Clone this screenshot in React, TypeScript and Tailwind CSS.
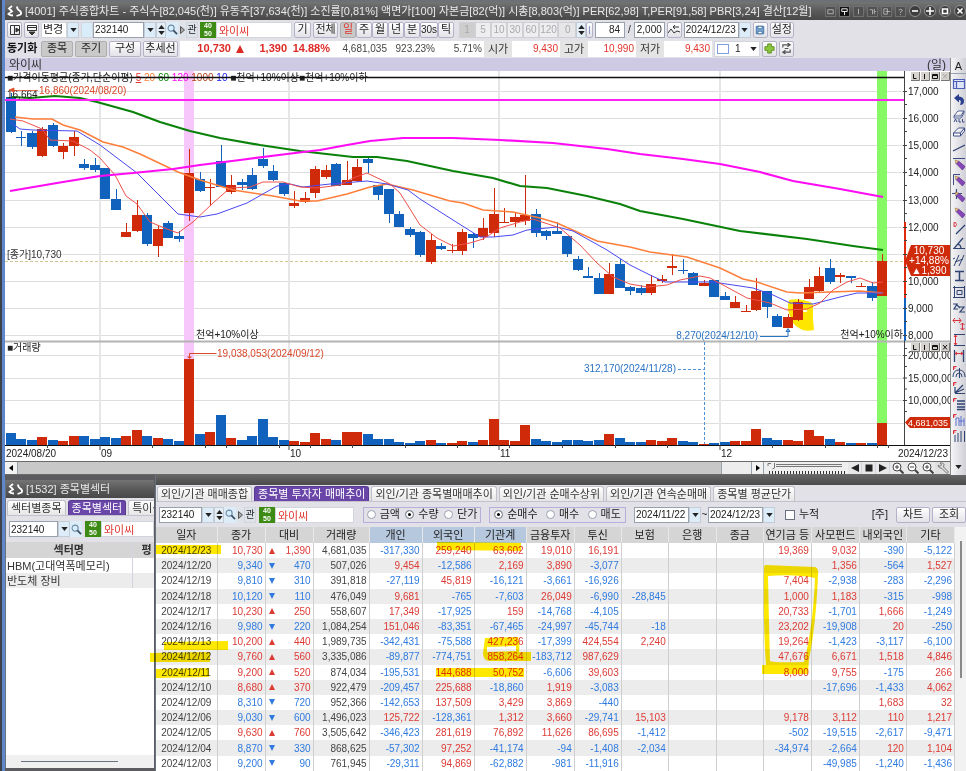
import { ReactNode } from 'react';
import clsx from 'clsx';

const FONT = "font-['Liberation_Sans','Noto_Sans_CJK_KR',sans-serif]";

const RED = '#cf2a0a';
const BLUE = '#1062bd';

// [up, high, body top, body bottom, low, volume height]
const candles: [number, number, number, number, number, number][] = [
  [0, 93, 97, 132, 133, 12], [0, 131, 137, 138, 146, 6], [0, 131, 133, 147, 149, 5], [1, 127, 129, 156, 157, 8],
  [0, 123, 125, 146, 147, 5], [1, 143, 146, 152, 159, 4], [1, 131, 137, 146, 156, 9], [0, 159, 164, 168, 170, 9],
  [0, 158, 165, 170, 172, 6], [0, 168, 168, 199, 199, 8], [0, 189, 199, 210, 210, 7], [1, 223, 232, 237, 237, 9],
  [1, 200, 215, 231, 232, 15], [0, 213, 215, 244, 246, 9], [1, 225, 229, 246, 257, 7], [0, 221, 223, 238, 238, 6],
  [0, 231, 236, 239, 242, 4], [1, 149, 173, 213, 221, 86], [0, 172, 179, 191, 192, 11], [1, 179, 187, 188, 206, 13],
  [0, 145, 161, 187, 187, 30], [1, 175, 185, 192, 194, 7], [0, 179, 182, 185, 190, 5], [0, 168, 175, 189, 190, 9],
  [0, 148, 159, 166, 168, 26], [0, 165, 171, 180, 181, 8], [0, 182, 183, 194, 196, 5], [1, 191, 203, 206, 208, 4],
  [1, 192, 198, 202, 203, 3], [1, 166, 169, 193, 198, 12], [1, 165, 170, 177, 179, 6], [0, 163, 164, 186, 186, 5],
  [1, 161, 180, 185, 185, 13], [1, 159, 167, 181, 182, 13], [0, 157, 159, 163, 173, 11], [0, 185, 185, 195, 200, 6],
  [0, 189, 189, 214, 223, 6], [0, 211, 214, 227, 227, 3], [0, 227, 229, 235, 237, 2], [0, 231, 232, 255, 257, 4],
  [1, 234, 240, 262, 264, 5], [0, 243, 246, 249, 250, 2], [1, 244, 250, 251, 253, 2], [1, 229, 232, 251, 255, 4],
  [0, 233, 234, 238, 248, 3], [1, 218, 228, 237, 240, 5], [1, 188, 214, 233, 237, 26], [1, 208, 222, 223, 223, 5],
  [1, 212, 217, 222, 227, 4], [1, 175, 215, 221, 225, 20], [0, 209, 214, 233, 237, 6], [0, 230, 231, 236, 240, 4],
  [0, 222, 231, 234, 234, 3], [0, 236, 236, 254, 257, 5], [0, 256, 259, 270, 271, 5], [0, 267, 276, 278, 278, 4],
  [0, 273, 278, 294, 294, 5], [1, 263, 274, 294, 294, 11], [0, 259, 264, 288, 288, 7], [0, 286, 287, 291, 295, 3],
  [0, 285, 288, 293, 295, 3], [1, 275, 284, 293, 295, 5], [1, 275, 279, 281, 283, 4], [1, 254, 266, 268, 275, 7],
  [0, 259, 270, 271, 274, 4], [0, 272, 273, 285, 285, 3], [1, 280, 283, 286, 286, 1], [0, 280, 280, 297, 297, 2],
  [0, 292, 296, 300, 300, 3], [1, 296, 302, 308, 308, 4], [1, 305, 311, 312, 312, 4], [1, 278, 291, 310, 311, 16],
  [0, 291, 291, 307, 318, 7], [0, 314, 316, 327, 327, 5], [1, 314, 317, 328, 328, 5], [1, 299, 302, 320, 321, 4],
  [1, 279, 287, 299, 299, 15], [1, 267, 276, 291, 293, 9], [0, 259, 268, 282, 284, 6], [1, 273, 275, 277, 283, 3],
  [0, 276, 276, 278, 283, 2], [1, 283, 286, 287, 287, 2], [0, 282, 286, 298, 301, 2], [1, 254, 261, 296, 296, 22],
];

const ma120 =
  '10,191 63,182 100,176 133,173 173,169 200,165 240,160 287,154 320,150 347,145 370,141 403,138 453,138 500,140 553,143 607,149 640,154 683,159 720,164 760,172 793,181 840,189 883,197';
const ma60 =
  '12,97 30,98 55,96 80,98 97,102 133,112 160,122 190,131 220,138 260,145 300,151 353,157 377,157 407,161 453,171 493,178 520,186 547,188 587,196 620,204 640,211 683,219 740,231 807,239 853,246 883,250';
const ma20 =
  '15,117 33,119 52,119 63,125 80,130 103,142 123,147 140,154 178,172 200,180 233,190 273,196 300,201 317,201 330,198 347,194 370,187 387,184 413,190 450,201 463,203 483,210 513,212 540,218 557,223 597,241 630,247 650,252 687,257 720,268 743,279 757,282 787,292 800,293 860,291 883,293';
const ma10 =
  '10,122 20,129 33,130 77,131 100,145 137,173 167,203 178,214 200,217 217,214 247,203 277,186 290,184 303,187 330,184 367,181 387,184 408,190 420,199 453,220 480,237 493,237 513,235 527,230 557,227 573,231 607,250 630,265 650,275 665,282 713,282 753,288 773,295 790,303 813,304 840,297 857,293 883,293';
const ma5 =
  '10,119 23,121 42,129 50,140 73,141 90,150 100,158 115,175 126,196 137,204 150,222 167,229 178,233 193,222 213,203 230,188 250,187 263,182 283,182 300,187 317,188 340,185 353,178 367,173 390,184 400,193 420,225 437,238 453,246 470,243 483,239 500,228 520,222 533,219 560,228 580,245 597,263 613,277 630,284 647,287 667,285 680,280 700,276 710,278 723,285 747,298 770,303 787,310 807,309 820,303 833,290 847,282 860,278 873,283 883,282';

const priceLevels = [17000, 16000, 15000, 14000, 13000, 12000, 11000, 10000, 9000, 8000];
const dateTicks = [47, 152, 205, 226, 279, 310, 352, 405, 457, 509, 562, 615, 667, 772, 825, 877, 888];
const months: [number, string][] = [[100, '09'], [289, '10'], [499, '11'], [720, '12']];

function priceY(price: number) {
  return Math.round(335 - (price - 8000) * 0.0271) + 0.5;
}

function PaneButtons({ y, faded }: { y: number; faded?: boolean }) {
  return (
    <g>
      {[911, 921, 931, 941].map((x) => (
        <g key={x}>
          <rect x={x} y={y} width="9" height="9" fill="#d6d3ce" />
          <path d={`M${x} ${y + 8.5}h8.5v-8.5`} stroke="#777" fill="none" />
        </g>
      ))}
      <path d={`M913.5 ${y + 2}v4.5h3M924.5 ${y + 2}v5`} stroke="#111" fill="none" />
      <path d={`M932.5 ${y + 2.5}h5v4h-5zM932.5 ${y + 3.5}h5`} stroke="#111" fill="none" />
      <path d={`M943 ${y + 2}l4 4.5m0-4.5l-4 4.5`} stroke={faded ? '#aaa' : '#111'} fill="none" />
    </g>
  );
}

function StockChart() {
  return (
    <svg viewBox="5 71 945 390" className="block w-full h-auto bg-white" fontSize="10" role="img" aria-label="와이씨 일봉 차트">
      <g stroke="#dedede">
        {priceLevels.map((p) => (
          <line key={p} x1="5" x2="904" y1={priceY(p)} y2={priceY(p)} />
        ))}
        {[355.5, 378.5, 400.5, 423.5].map((y) => (
          <line key={y} x1="5" x2="904" y1={y} y2={y} />
        ))}
      </g>
      {months.map(([x]) => (
        <line key={x} x1={x} x2={x} y1="71" y2="445" stroke="#e6e6e6" strokeWidth="2" />
      ))}
      <rect x="184" y="71" width="10" height="288" fill="#f7c6fb" />
      <rect x="877" y="71" width="10" height="352" fill="#86f964" />
      <line x1="5" x2="904" y1="261.5" y2="261.5" stroke="#cfc78f" strokeDasharray="3 2" />

      {/* marker stroke around the 12/11 candle */}
      <path d="M789 300q8 -2 18 1q6 1 6 5v13l1 11q-10 2 -15 -2q-7 -4 -8 -10q-5 -9 -2 -18z" fill="#ffe600" />
      <ellipse cx="805" cy="311" rx="2.5" ry="1" fill="#fff" />

      {candles.map(([up, high, top, bottom, low, vol], i) => {
        const x = Math.round(10.6 + 10.5 * i);
        const color = up ? RED : BLUE;
        return (
          <g key={i} fill={color}>
            <line x1={x + 0.5} x2={x + 0.5} y1={high} y2={low} stroke={color} />
            <rect x={x - 5} y={top} width="10" height={bottom - top} />
            <rect x={x - 5} y={445 - vol} width="10" height={vol} />
          </g>
        );
      })}

      <g fill="none">
        <polyline points={ma20} stroke="#ff7f3a" strokeWidth="1.5" />
        <polyline points={ma10} stroke="#4a48f0" strokeWidth="1" />
        <polyline points={ma5} stroke="#f0504a" strokeWidth="1" />
        <polyline points={ma60} stroke="#0a820a" strokeWidth="2.2" />
        <polyline points={ma120} stroke="#ff0cf4" strokeWidth="2.2" />
      </g>

      <line x1="5" x2="904" y1="100" y2="100" stroke="#ff22f4" strokeWidth="2" />
      <text x="7" y="81" fill="#222">
        ■가격이동평균(종가,단순이평) <tspan fill="#e8332c" textDecoration="underline">5</tspan>{' '}
        <tspan fill="#ff7f3a">20</tspan> <tspan fill="#0a820a">60</tspan> <tspan fill="#ff0cf4">120</tspan>{' '}
        <tspan fill="#b5431f">1000</tspan> <tspan fill="#2222ee">10</tspan> ■천억+10%이상■천억+10%이하
      </text>
      <line x1="5" x2="904" y1="77.5" y2="77.5" stroke="#111" strokeWidth="1.5" />
      <text x="7" y="98" fill="#222">16,664</text>
      <path d="M12 90.5h26M9 90l5-2v4z" stroke="#e0502f" fill="#e0502f" strokeWidth="0.8" />
      <text x="39" y="94" fill="#d9482b">16,860(2024/08/20)</text>
      <text x="7" y="258" fill="#333">[종가]10,730</text>
      <text x="196" y="338" fill="#222">천억+10%이상</text>
      <text x="903" y="338" fill="#222" textAnchor="end">천억+10%이하</text>
      <text x="758" y="339" fill="#2b74c4" textAnchor="end">8,270(2024/12/10)</text>
      <path d="M760 336.5h28v-7m-2 2l2-3l2 3z" stroke="#2b74c4" fill="none" />

      <line x1="5" x2="950" y1="341.5" y2="341.5" stroke="#b4b4b4" strokeWidth="2" />
      <text x="7" y="351" fill="#222">■거래량</text>
      <path d="M189.5 357v-3.500h27" stroke="#d9482b" fill="none" />
      <path d="M187 356.500h5l-2.500 2.500z" fill="#d9482b" />
      <text x="217" y="357" fill="#d9482b">19,038,053(2024/09/12)</text>
      <text x="676" y="372" fill="#2b74c4" textAnchor="end">312,170(2024/11/28)</text>
      <path d="M678 369.500h26M704.500 342v102" stroke="#4f93d8" strokeDasharray="3 2" fill="none" />

      {/* axes */}
      <rect x="905" y="71" width="45" height="390" fill="#fff" />
      <rect x="5" y="446" width="945" height="15" fill="#fff" />
      <line x1="904.5" x2="904.5" y1="71" y2="445" stroke="#444" />
      <line x1="5" x2="950" y1="445.5" y2="445.5" stroke="#111" />
      <line x1="905" x2="905" y1="222" y2="298" stroke="#e02a10" strokeWidth="2" />
      <line x1="905" x2="905" y1="298" y2="341" stroke="#1062bd" strokeWidth="2" />
      <line x1="905" x2="950" y1="341.5" y2="341.5" stroke="#b4b4b4" strokeWidth="2" />
      {priceLevels.map((p) => (
        <g key={p} fill="#222">
          <path d={`M903 ${priceY(p)}h4M904 ${priceY(p) + 13}h3`} stroke="#444" />
          {p !== 11000 && <text x="908" y={priceY(p) + 3.5}>{p.toLocaleString('en-US')}</text>}
        </g>
      ))}
      {['20,000,000', '15,000,000', '10,000,000'].map((label, i) => (
        <g key={label} fill="#222">
          <path d={`M903 ${355.5 + i * 22.5}h4M904 ${366.5 + i * 22.5}h3`} stroke="#444" />
          <text x="908" y={359 + i * 22.5}>{label}</text>
        </g>
      ))}
      <PaneButtons y={72} faded />
      <PaneButtons y={343} />
      <path d="M905 261l6-16h39v31h-39z" fill={RED} />
      <g fill="#fff" textAnchor="middle">
        <text x="929" y="254">10,730</text>
        <text x="929" y="264">+14,88%</text>
        <text x="929" y="274">▲1,390</text>
      </g>
      <path d="M905 422.500l5-5.500h40v11h-40z" fill={RED} />
      <text x="908" y="426" fontSize="9" fill="#fff">4,681,035</text>
      {dateTicks.map((x) => (
        <line key={x} x1={x + 0.5} x2={x + 0.5} y1="445" y2="448" stroke="#444" />
      ))}
      {months.map(([x, label]) => (
        <g key={x} fill="#222">
          <line x1={x} x2={x} y1="445" y2="450" stroke="#444" />
          <text x={x + 1} y="457">{label}</text>
        </g>
      ))}
      <text x="6" y="457" fill="#222">2024/08/20</text>
      <text x="948" y="457" fill="#222" textAnchor="end">2024/12/23</text>
    </svg>
  );
}

function Caret({ up }: { up?: boolean }) {
  return (
    <svg viewBox="0 0 8 5" className="w-[7px] h-[4px] shrink-0">
      <path d={up ? 'M0 5L4 0l4 5z' : 'M0 0h8L4 5z'} fill="#222" />
    </svg>
  );
}

function ArrowButton({ label }: { label: string }) {
  return (
    <button aria-label={label} className="w-[12px] h-4 flex items-center justify-center bg-[#dcecf8] border border-[#c4ccd6] shrink-0">
      <Caret />
    </button>
  );
}

function Spinner() {
  return (
    <span className="flex flex-col justify-between w-[10px] h-4 py-[2px] items-center bg-[#e4eef6] border border-[#c4ccd6] shrink-0">
      <Caret up />
      <Caret />
    </span>
  );
}

function SearchButton() {
  return (
    <button aria-label="검색" className="w-[12px] h-4 flex items-center justify-center bg-[#dcecf8] shrink-0">
      <svg viewBox="0 0 12 12" className="w-[11px] h-[11px]" fill="none">
        <circle cx="4.500" cy="4.500" r="3.300" fill="#d5efff" stroke="#6d8ba3" strokeWidth="1.200" />
        <path d="M7 7l4 4" stroke="#3c5266" strokeWidth="2" />
      </svg>
    </button>
  );
}

function MarginBadge() {
  return (
    <span className="w-4 h-4 flex flex-col bg-[#3d8a14] text-white text-[7px] leading-[8px] text-center font-bold shrink-0">
      <span>40</span>
      <span>50</span>
    </span>
  );
}

function CodeSearch({ id, full, width }: { id: string; full?: boolean; width: string }) {
  return (
    <div className="flex items-center shrink-0">
      <label htmlFor={id} className="sr-only">종목코드</label>
      <input id={id} defaultValue="232140" className={clsx('h-4 pl-px bg-white border border-gray-400 text-[10px] leading-none text-[#222]', width)} />
      <ArrowButton label="최근 종목" />
      {full && <Spinner />}
      <SearchButton />
      {full && (
        <>
          <button aria-label="다음 종목" className="w-[8px] h-4 flex items-center justify-center bg-[#dfe3ea] shrink-0">
            <svg viewBox="0 0 5 8" className="w-[5px] h-[8px]">
              <path d="M.5.500L4.500 4L.5 7.500z" fill="#aaa" stroke="#555" />
            </svg>
          </button>
          <button className="w-[12px] h-4 flex items-center justify-center bg-[#dfe3ea] border border-gray-300 text-[10px] leading-none text-[#222] shrink-0">관</button>
        </>
      )}
    </div>
  );
}

function ToolButton({ children, className, pressed }: { children: ReactNode; className?: string; pressed?: boolean }) {
  return (
    <button
      className={clsx(
        'h-4 flex items-center justify-center border rounded-[2px] leading-none shrink-0',
        pressed ? 'bg-[#c9c9c9] border-[#aeaeae]' : 'bg-linear-to-b from-white to-[#e2e2e8] border-[#b4b2c8]',
        className,
      )}
    >
      {children}
    </button>
  );
}

function Logo() {
  return (
    <svg viewBox="0 0 16 12" className="w-4 h-3 shrink-0" fill="none" stroke="#fff" strokeWidth="1.800">
      <path d="M5 1L2 3.500Q4 5 5 6.500Q3 7.500 1.500 9Q3 10.500 6 10.500" />
      <path d="M10 1.500Q10 4.500 13 6Q15 8 13.500 9.500L9.500 11" />
    </svg>
  );
}

function TitleBar({ title, children }: { title: string; children?: ReactNode }) {
  return (
    <div className="h-[18px] flex items-center gap-[2px] pl-[2px] bg-linear-to-b from-[#747474] via-[#5a5a5a] to-[#484848] text-[#e8e8e8] overflow-hidden">
      <Logo />
      <h2 className="text-[11px] leading-none whitespace-nowrap flex-1">{title}</h2>
      {children}
    </div>
  );
}

const frameIcons = ['M2 3h6v4.500H2z', 'M2 2h6v3H2zM5 5v4', 'M5 2v6', 'M2 3h3v5M7 2v6M7 5h2', 'M2 2h4v6H2zM4 5h5', 'M3 3.500q2-2 4 0q0 1-2 2v1M5 8v1'];
const windowIcons = ['M3 6h6', 'M6 2v8M2 6h8', 'M3.500 4h5v4.500h-5z', 'M3.500 3.500l5 5m0-5l-5 5'];

function WindowControls() {
  return (
    <div className="flex items-center gap-[3px]">
      {frameIcons.map((d, i) => (
        <button key={d} aria-label={`창 설정 ${i + 1}`} className={clsx('w-[11px] h-[11px] border border-[#707070]', i === 1 ? 'bg-[#111]' : 'bg-[#505050]')}>
          <svg viewBox="0 0 10 10" className="w-[9px] h-[9px]" fill="none" stroke={i === 1 ? '#fff' : '#b8b8b8'}>
            <path d={d} />
          </svg>
        </button>
      ))}
      {windowIcons.map((d, i) => (
        <button key={d} aria-label={`창 제어 ${i + 1}`}>
          <svg viewBox="0 0 12 12" className="w-3 h-3" fill="none">
            <circle cx="6" cy="6" r="5.500" fill="#3d3d3d" stroke="#929292" />
            <path d={d} stroke="#fff" strokeWidth="1.600" />
          </svg>
        </button>
      ))}
    </div>
  );
}

const periods = ['일', '주', '월', '년', '분', '30s', '틱'];
const minutes = ['1', '5', '10', '30', '60', '120'];

function ChartToolbar() {
  return (
    <div className="h-[19px] flex items-center gap-[2px] pl-[2px] pr-2 bg-[#e3e1e8] text-[11px] leading-none text-[#222] overflow-hidden">
      <ToolButton className="w-[15px]">
        <svg viewBox="0 0 12 12" className="w-3 h-3" fill="none" stroke="#333">
          <path d="M1.500 1.500h9v9h-9zM5.500 1.500v9" />
          <path d="M7 4l3 2l-3 2z" fill="#333" />
        </svg>
      </ToolButton>
      <ToolButton className="w-[15px]">
        <svg viewBox="0 0 12 12" className="w-3 h-3" fill="none" stroke="#333">
          <path d="M1.500 1.500h9v5h-9zM1 3.500h10" />
          <path d="M3 8h6l-3 3z" fill="#333" />
        </svg>
      </ToolButton>
      <div className="flex shrink-0">
        <label htmlFor="change" className="sr-only">변경</label>
        <select id="change" className="appearance-none w-[26px] h-4 px-px bg-white border border-gray-300 leading-none">
          <option>변경</option>
        </select>
        <ArrowButton label="변경 목록" />
      </div>
      <div className="flex items-center shrink-0">
        <span className="w-[12px] h-4 bg-[#d9ecfa] border border-gray-300" />
        <CodeSearch id="chart-code" full width="w-[51px]" />
      </div>
      <div className="flex shrink-0">
        <MarginBadge />
        <input aria-label="종목명" defaultValue="와이씨" className="w-[76px] h-4 pl-[2px] bg-white border border-gray-300 leading-none text-[#e0342b]" />
      </div>
      <ToolButton className="w-[17px]">기</ToolButton>
      <ToolButton className="w-[25px]">전체</ToolButton>
      <div className="flex shrink-0">
        {periods.map((p, i) => (
          <ToolButton key={p} pressed={i === 0} className={clsx(p === '30s' ? 'w-[18px] text-[10px]' : 'w-4', i === 0 && 'text-[#e0342b]')}>{p}</ToolButton>
        ))}
      </div>
      <div className="flex ml-[3px] shrink-0 text-[10px]">
        {minutes.map((m, i) => (
          <button key={m} disabled className={clsx('h-4 border border-[#cfcfd4] leading-none text-[#a9a9ad]', m === '120' ? 'w-[19px]' : 'w-4', i === 0 ? 'bg-[#cdcdcd]' : 'bg-[#eeeef0]')}>
            {m}
          </button>
        ))}
        <input aria-label="분 주기" disabled defaultValue="0" className="w-[18px] h-4 pl-[6px] bg-[#e6e6e8] border border-[#cfcfd4] leading-none text-[#a9a9ad]" />
        <Spinner />
        <ToolButton className="w-[7px]">
          <span className="w-px h-2 bg-[#8a98c8]" />
        </ToolButton>
      </div>
      <div className="flex items-center gap-[3px] shrink-0 text-[10px]">
        <input aria-label="표시 봉 수" defaultValue="84" className="w-[30px] h-4 pr-1 text-right leading-none bg-white border border-gray-400" />
        <span>/</span>
        <input aria-label="전체 봉 수" defaultValue="2,000" className="w-[31px] h-4 pr-[2px] text-right leading-none bg-white border border-gray-400" />
      </div>
      <ToolButton className="w-[15px]">
        <svg viewBox="0 0 12 12" className="w-3 h-3" fill="none" stroke="#333">
          <path d="M0 9l3-4l3 4l3-2l3 1M11 3H5m2-2L5 3l2 2" />
        </svg>
      </ToolButton>
      <div className="flex shrink-0">
        <label htmlFor="chart-date" className="sr-only">조회일</label>
        <input id="chart-date" defaultValue="2024/12/23" className="w-[55px] h-4 pl-px leading-none bg-white border border-gray-400 text-[10px]" />
        <ArrowButton label="달력" />
      </div>
      <ToolButton className="w-[15px]">
        <svg viewBox="0 0 12 12" className="w-[10px] h-[10px]" fill="#fff" stroke="#3a6a9c">
          <path d="M1.500 1.500h9v9h-9z" fill="#7aa9d6" />
          <path d="M3.500 1.500h5v3h-5zM3.500 7.500h5v3h-5z" />
        </svg>
      </ToolButton>
      <ToolButton className="w-[24px]">설정</ToolButton>
    </div>
  );
}

function Quote({ label, value }: { label: string; value: string }) {
  return (
    <div className="flex h-4 items-center">
      <span className="w-[28px] h-4 leading-4 text-center bg-[#e4e4e4] text-[#333]">{label}</span>
      <span className="w-[48px] h-4 leading-4 pr-[2px] text-right text-[10px] bg-white text-[#e0342b]">{value}</span>
    </div>
  );
}

function QuoteBar() {
  return (
    <div className="h-[19px] flex items-center gap-[2px] pl-[2px] bg-[#e3e1e8] text-[11px] text-[#222] overflow-hidden">
      <strong className="w-[32px] leading-none text-[#111] whitespace-nowrap">동기화</strong>
      <ToolButton pressed className="w-[32px]">종목</ToolButton>
      <ToolButton pressed className="w-[32px]">주기</ToolButton>
      <ToolButton className="w-[32px]">구성</ToolButton>
      <ToolButton className="w-[35px]">추세선</ToolButton>
      <div className="flex items-center h-4 bg-white">
        <div className="flex items-center w-[304px] text-right whitespace-nowrap text-[10px]">
          <b className="w-[51px] text-[11px] leading-none text-[#dd2a24]">10,730</b>
          <svg viewBox="0 0 8 8" className="w-2 h-2 ml-[5px]">
            <path d="M4 0l4 8H0z" fill="#dd2a24" />
          </svg>
          <b className="w-[43px] text-[11px] leading-none text-[#dd2a24]">1,390</b>
          <b className="w-[43px] text-[11px] leading-none text-[#dd2a24]">14.88%</b>
          <span className="w-[57px] text-[#444]">4,681,035</span>
          <span className="w-[48px] text-[#444]">923.23%</span>
          <span className="w-[47px] text-[#444]">5.71%</span>
        </div>
        <Quote label="시가" value="9,430" />
        <Quote label="고가" value="10,990" />
        <Quote label="저가" value="9,430" />
      </div>
      <div className="flex items-center h-4 bg-white border border-gray-300 pl-[2px] w-[46px] gap-[6px]">
        <input id="multi" type="checkbox" className="appearance-none w-3 h-[10px] border border-[#7f9fe0] bg-white shrink-0" />
        <label htmlFor="multi" className="text-[10px] leading-none">1</label>
        <button aria-label="차트 분할" className="ml-auto w-[12px] h-[14px] flex items-center justify-center">
          <Caret />
        </button>
      </div>
      <ToolButton className="w-[15px]">
        <svg viewBox="0 0 12 12" className="w-[11px] h-[11px]">
          <path d="M4 1h4v3h3v4H8v3H4V8H1V4h3z" fill="#8cc63f" stroke="#5d8d20" />
        </svg>
      </ToolButton>
      <ToolButton className="w-[15px]">
        <svg viewBox="0 0 12 12" className="w-[11px] h-[11px]" fill="none" stroke="#555" strokeWidth="1.300">
          <path d="M2 5V2h7M7 0l3 2l-3 2M10 7v3H3M5 8l-3 2l3 2M4 6h4" />
        </svg>
      </ToolButton>
    </div>
  );
}

const pencil = (
  <>
    <path d="M4 6.500L6.500 4L13 9.500L10.500 13z" fill="#8648b8" stroke="#5a2d86" strokeWidth="0.700" />
    <path d="M3 3l3.500 1L4 6.500z" fill="#f3c98a" stroke="#8a6a3c" strokeWidth="0.500" />
  </>
);

const redMark = <path d="M1.500 5V1.500h3M1.500 3h2" stroke="#d9333f" />;

// drawing tools down the right edge of the chart, top to bottom
const drawTools: { name: string; icon: ReactNode }[] = [
  { name: '목록', icon: <path d="M1.500 2.500h11v9h-11zM2 4.500h10M4.500 5v6" fill="#dfe6fa" stroke="#4a5fb5" strokeWidth="1.200" /> },
  { name: '되돌리기', icon: <path d="M2 5l5-4v2.500q5 .5 5 4.500t-4 4q2-5-1-5v2.500z" fill="#2c3f8f" /> },
  {
    name: '전체 지우기',
    icon: (
      <>
        <path d="M2 7l4-5h6l-3 5zM2 7v2h7l3-5V2" fill="#fff" stroke="#3c4c86" strokeWidth="0.900" />
        <path d="M2 13l1.500-3L5 13M7 10v3h2M10.500 10v3h2" stroke="#3c4c86" />
      </>
    ),
  },
  { name: '지우기', icon: <path d="M1.500 8l5-5h6l-4 5zM1.500 8v3h7l4-5V3M8.500 8v3" fill="#fff" stroke="#3c4c86" /> },
  { name: '추세선', icon: <path d="M1 10L13 4" stroke="#2e4372" strokeWidth="1.300" /> },
  { name: '수평선', icon: <><path d="M1 1.500h12" stroke="#3c4c86" />{pencil}</> },
  { name: '수직선', icon: <><path d="M1.500 12V1.500H8" stroke="#3c4c86" />{pencil}</> },
  { name: '십자선', icon: <><path d="M0 4.500h10M4.500 0v10" stroke="#3c4c86" strokeWidth="1.200" />{pencil}</> },
  { name: '자유선', icon: pencil },
  { name: '각도선', icon: <><path d="M2 1.500v4h1.500q2-2 0-4z" stroke="#d9333f" /><path d="M4 13l9-9" stroke="#2e4372" strokeWidth="1.200" /></> },
  { name: '각도', icon: <path d="M11 1L2 11.500h11M6 7q3 1 3 4.500" stroke="#2e4372" strokeWidth="1.200" /> },
  { name: '채널', icon: <path d="M2 13L7 2M7 13l5-11M3 9l8-3M1 6l2-1" stroke="#2e4372" /> },
  { name: '구간', icon: <path d="M3 2.500h9M3 11.500h9M7.500 2.500v9" stroke="#2e4372" strokeWidth="1.500" /> },
  { name: '사각형', icon: <path d="M2.500 1v12M1 2.500h12M12.500 1v12M1 12.500h12M5 5.500h5v4H5z" stroke="#2e4372" /> },
  { name: '파동', icon: <path d="M1 3h4L2 8h4M7 6h5l-4 5h5M5 4l3 3" stroke="#2e4372" strokeWidth="1.200" /> },
  { name: '가격폭', icon: <path d="M1 3.500h8M3 1L1 3.500L3 6M7 1l2 2.500L7 6M10.500 6v7M8.500 11l2 2l2-2M8.500 8l2-2l2 2" stroke="#d9333f" /> },
  { name: '수평 비율', icon: <><path d="M2 1.500h11M2 12.500h11" stroke="#2e4372" /><path d="M3.500 2v10M2 4l1.500-2L5 4M2 10l1.500 2L5 10" stroke="#d9333f" /></> },
  { name: '수직 비율', icon: <><path d="M2.500 1v12M11.500 1v12" stroke="#2e4372" strokeWidth="1.300" /><path d="M3 4.500h8M5 3L3 4.500L5 6M9 3l2 1.500L9 6" stroke="#d9333f" /></> },
  { name: '피보나치 호', icon: <><path d="M1 12q0-7 6-7t6 7M4 12q0-4 3-4t3 4M7.500 3v10" stroke="#2e4372" />{redMark}</> },
  { name: '피보나치 팬', icon: <><path d="M3 12.500h10M3 12L12 8M3 12l8-8M3 12V6" stroke="#2e4372" strokeWidth="1.200" />{redMark}</> },
  { name: '피보나치 되돌림', icon: <><path d="M5 4h8M5 7h8M5 10h8M5 12.500h8" stroke="#2e4372" strokeWidth="1.500" />{redMark}</> },
  { name: '시간대', icon: <><path d="M4 13V5h3v8M9 13V3M12 13V5M7 8h5" stroke="#5b6fd0" />{redMark}</> },
  { name: '피보나치 시간대', icon: <><path d="M3 13V6M6 13V4M9 13V2M12.500 13V2" stroke="#2e4372" />{redMark}</> },
];

function DrawToolbar() {
  return (
    <div className="w-4 shrink-0 flex flex-col bg-linear-to-r from-[#f6f6f8] to-[#cfcfd6] border-l border-[#8c8c8c] overflow-hidden">
      <button className="h-4 text-[11px] leading-4 text-[#222] border-b border-gray-400">A</button>
      <div className="flex flex-col pt-[2px]">
        {drawTools.map((tool) => (
          <button key={tool.name} aria-label={tool.name} className="h-4 flex items-center justify-center">
            <svg viewBox="0 0 14 14" className="w-[14px] h-[14px]" fill="none">
              {tool.icon}
            </svg>
          </button>
        ))}
      </div>
      <button aria-label="더 보기" className="mt-auto h-4 flex items-center justify-center">
        <Caret />
      </button>
    </div>
  );
}

const playIcons = ['M9 1v8L1 5z', 'M1.500 1.500h7v7h-7z', 'M1 1v8l8-4z'];
const zoomIcons = ['M3 5h4M5 3v4', 'M3 5h4', 'M4 4h2v2H4z'];

function ChartScroll() {
  return (
    <div className="h-[14px] flex bg-[#efefef] border-y border-[#6a6a6a]">
      <button aria-label="왼쪽으로" className="w-[13px] flex items-center justify-center bg-[#f2f2f2] border-r border-gray-400">
        <svg viewBox="0 0 4 6" className="w-1 h-[6px]"><path d="M4 0v6L0 3z" /></svg>
      </button>
      <div className="flex-1 flex bg-[#ededed]">
        <div className="w-[96%] bg-[#c8c8c8] border-r border-gray-400" />
      </div>
      <button aria-label="오른쪽으로" className="w-[13px] flex items-center justify-center bg-[#f2f2f2] border-x border-gray-400">
        <svg viewBox="0 0 4 6" className="w-1 h-[6px]"><path d="M0 0v6l4-3z" /></svg>
      </button>
      <svg viewBox="0 0 84 12" className="w-[84px] h-3 shrink-0" fill="none" stroke="#777">
        <path d="M4 4V1.500h3M10.500 1v5l-2 1M12 2.500h66M12 4.500h66" />
        <path d="M5 10.500h76" stroke="#333" strokeWidth="3" strokeDasharray="1 2" />
      </svg>
      {playIcons.map((d) => (
        <button key={d} aria-label="재생" className="w-[14px] flex items-center justify-center bg-[#e8e8e8] border-r border-gray-300">
          <svg viewBox="0 0 10 10" className="w-[10px] h-[10px]" fill="#222"><path d={d} /></svg>
        </button>
      ))}
      {zoomIcons.map((d) => (
        <button key={d} aria-label="확대/축소" className="w-[15px] flex items-center justify-center bg-[#e8e8e8]">
          <svg viewBox="0 0 12 12" className="w-3 h-3" fill="none" stroke="#444">
            <circle cx="5" cy="5" r="4" fill="#fff" />
            <path d={d} />
            <path d="M8 8l3.500 3.500" strokeWidth="2" />
          </svg>
        </button>
      ))}
      <button aria-label="차트 환경" className="w-[15px] flex items-center justify-center bg-[#e0e0e0]">
        <svg viewBox="0 0 12 12" className="w-3 h-3" fill="#ddd" stroke="#777">
          <path d="M1 3l2 1.500L4.500 3L3 1q3-1 4 1.500L6.500 5l5 5L10 11.500l-5-5Q1.500 6.500 1 3z" />
        </svg>
      </button>
    </div>
  );
}

function Tabs({ tabs, active, className }: { tabs: string[]; active: number; className?: string }) {
  return (
    <div className={clsx('flex gap-[2px] overflow-hidden border-b border-[#c4c2cc]', className)}>
      {tabs.map((tab, i) => (
        <button
          key={tab}
          className={clsx(
            'h-[15px] px-[3px] rounded-t-[3px] text-[11px] leading-none whitespace-nowrap shrink-0 border border-b-0',
            i === active ? 'bg-[#6a46a8] text-white border-[#583a90]' : 'bg-linear-to-b from-white to-[#e6e6e6] text-[#333] border-[#c0c0c8]',
          )}
        >
          {tab}
        </button>
      ))}
    </div>
  );
}

function SectorPanel() {
  return (
    <section className="w-[149px] shrink-0 mt-[5px] mb-[3px] flex flex-col border-l border-gray-500 bg-white overflow-hidden">
      <TitleBar title="[1532] 종목별섹터" />
      <div className="bg-[#e3e1e8] pt-[2px] pl-px">
        <Tabs tabs={['섹터별종목', '종목별섹터', '특이섹터']} active={1} />
        <div className="h-[26px] flex items-center gap-[3px] pl-[2px]">
          <CodeSearch id="sector-code" width="w-[49px]" />
          <div className="flex flex-1 min-w-0">
            <MarginBadge />
            <input aria-label="섹터 종목명" defaultValue="와이씨" className="flex-1 min-w-0 h-4 pl-[2px] bg-white border border-gray-300 text-[11px] leading-none text-[#e0342b]" />
          </div>
        </div>
      </div>
      <table className="w-full table-fixed border-collapse text-[11px] leading-[14px] text-[#333]">
        <thead>
          <tr className="h-4 bg-[#d5d5d5]">
            <th className="w-[126px] font-bold border-r border-gray-300">섹터명</th>
            <th className="font-bold whitespace-nowrap pl-[9px] text-left">평</th>
          </tr>
        </thead>
        <tbody>
          <tr className="h-[15px]">
            <td className="border-r border-gray-300 pl-px whitespace-nowrap">HBM(고대역폭메모리)</td>
            <td />
          </tr>
          <tr className="h-[15px] bg-[#ececec]">
            <td className="border-r border-gray-300 pl-px">반도체 장비</td>
            <td />
          </tr>
        </tbody>
      </table>
      <div className="mt-auto h-[13px] bg-[#f0f0f0] flex items-center pl-[15px]">
        <div className="w-[97px] h-px bg-gray-500" />
      </div>
    </section>
  );
}

const columns = ['일자', '종가', '대비', '거래량', '개인', '외국인', '기관계', '금융투자', '투신', '보험', '은행', '종금', '연기금 등', '사모펀드', '내외국인', '기타'];
const columnWidths = [
  'w-[61px]', 'w-[48px]', 'w-[48px]', 'w-[56px]', 'w-[53px]', 'w-[52px]', 'w-[52px]', 'w-[48px]',
  'w-[47px]', 'w-[47px]', 'w-[48px]', 'w-[47px]', 'w-[48px]', 'w-[48px]', 'w-[47px]', 'w-[48px]',
];

const rows: string[][] = [
  ['2024/12/23', '10,730', '+1,390', '4,681,035', '-317,330', '259,240', '63,602', '19,010', '16,191', '', '', '', '19,369', '9,032', '-390', '-5,122'],
  ['2024/12/20', '9,340', '-470', '507,026', '9,454', '-12,586', '2,169', '3,890', '-3,077', '', '', '', '', '1,356', '-564', '1,527'],
  ['2024/12/19', '9,810', '-310', '391,818', '-27,119', '45,819', '-16,121', '-3,661', '-16,926', '', '', '', '7,404', '-2,938', '-283', '-2,296'],
  ['2024/12/18', '10,120', '-110', '476,049', '9,681', '-765', '-7,603', '26,049', '-6,990', '-28,845', '', '', '1,000', '1,183', '-315', '-998'],
  ['2024/12/17', '10,230', '+250', '558,607', '17,349', '-17,925', '159', '-14,768', '-4,105', '', '', '', '20,733', '-1,701', '1,666', '-1,249'],
  ['2024/12/16', '9,980', '-220', '1,084,254', '151,046', '-83,351', '-67,465', '-24,997', '-45,744', '-18', '', '', '23,202', '-19,908', '20', '-250'],
  ['2024/12/13', '10,200', '+440', '1,989,735', '-342,431', '-75,588', '427,236', '-17,399', '424,554', '2,240', '', '', '19,264', '-1,423', '-3,117', '-6,100'],
  ['2024/12/12', '9,760', '+560', '3,335,086', '-89,877', '-774,751', '858,264', '-183,712', '987,629', '', '', '', '47,676', '6,671', '1,518', '4,846'],
  ['2024/12/11', '9,200', '+520', '874,034', '-195,531', '144,688', '50,752', '-6,606', '39,603', '', '', '', '8,000', '9,755', '-175', '266'],
  ['2024/12/10', '8,680', '+370', '922,479', '-209,457', '225,688', '-18,860', '1,919', '-3,083', '', '', '', '', '-17,696', '-1,433', '4,062'],
  ['2024/12/09', '8,310', '-720', '952,366', '-142,653', '137,509', '3,429', '3,869', '-440', '', '', '', '', '', '1,683', '32'],
  ['2024/12/06', '9,030', '-600', '1,496,023', '125,722', '-128,361', '1,312', '3,660', '-29,741', '15,103', '', '', '9,178', '3,112', '110', '1,217'],
  ['2024/12/05', '9,630', '+760', '3,505,642', '-346,423', '281,619', '76,892', '11,626', '86,695', '-1,412', '', '', '-502', '-19,515', '-2,617', '-9,471'],
  ['2024/12/04', '8,870', '-330', '868,625', '-57,302', '97,252', '-41,174', '-94', '-1,408', '-2,034', '', '', '-34,974', '-2,664', '120', '1,104'],
  ['2024/12/03', '9,200', '-90', '761,945', '-29,311', '94,869', '-62,882', '-981', '-11,916', '', '', '', '', '-49,985', '-1,240', '-1,436'],
];

function FlowRow({ row }: { row: string[] }) {
  const [date, close, change, volume, ...flows] = row;
  const up = change.startsWith('+');
  const color = up ? 'text-[#dd3a34]' : 'text-[#2f7be0]';
  const cell = 'border-r border-[#cfcfcf] pr-[2px]';

  return (
    <tr className="odd:bg-white even:bg-[#ececec]">
      <td className="border-r border-[#cfcfcf] text-center text-[#444]">{date}</td>
      <td className={clsx(cell, color)}>{close}</td>
      <td className={clsx(cell, color)}>
        <div className="flex items-center justify-between pl-[3px]">
          <svg viewBox="0 0 6 6" className="w-[6px] h-[6px]" fill="currentColor">
            <path d={up ? 'M3 0l3 6H0z' : 'M0 0h6L3 6z'} />
          </svg>
          {change.slice(1)}
        </div>
      </td>
      <td className={clsx(cell, 'text-[#444]')}>{volume}</td>
      {flows.map((value, i) => (
        <td key={i} className={clsx(cell, value.startsWith('-') ? 'text-[#2f7be0]' : 'text-[#dd3a34]')}>{value}</td>
      ))}
    </tr>
  );
}

function Radio({ name, label, checked }: { name: string; label: string; checked?: boolean }) {
  return (
    <label className="flex items-center gap-1">
      <input
        type="radio"
        name={name}
        defaultChecked={checked}
        className="appearance-none w-[9px] h-[9px] rounded-full border border-gray-400 bg-white checked:bg-black checked:shadow-[inset_0_0_0_2px_white]"
      />
      {label}
    </label>
  );
}

function InvestorFilter() {
  return (
    <div className="h-[25px] flex items-center pl-[3px] bg-[#e3e1e8] text-[11px] leading-none text-[#222] whitespace-nowrap">
      <CodeSearch id="flow-code" full width="w-[43px]" />
      <div className="flex ml-[3px]">
        <MarginBadge />
        <input aria-label="투자자 종목명" defaultValue="와이씨" className="w-[79px] h-4 pl-[2px] bg-white border border-gray-300 leading-none text-[#e0342b]" />
      </div>
      <fieldset className="h-4 w-[118px] ml-[9px] flex items-center justify-around border border-[#b9aedb]">
        <Radio name="unit" label="금액" />
        <Radio name="unit" label="수량" checked />
        <Radio name="unit" label="단가" />
      </fieldset>
      <fieldset className="h-4 w-[137px] ml-2 flex items-center justify-around border border-[#b9aedb]">
        <Radio name="side" label="순매수" checked />
        <Radio name="side" label="매수" />
        <Radio name="side" label="매도" />
      </fieldset>
      <div className="flex items-center ml-2 text-[10px]">
        <input aria-label="시작일" defaultValue="2024/11/22" className="w-[55px] h-4 pl-px leading-none bg-white border border-gray-400" />
        <ArrowButton label="시작일 달력" />
        <span className="w-[7px] text-center">~</span>
        <input aria-label="종료일" defaultValue="2024/12/23" className="w-[55px] h-4 pl-px leading-none bg-white border border-gray-400" />
        <ArrowButton label="종료일 달력" />
      </div>
      <label className="flex items-center gap-1 ml-[10px]">
        <input type="checkbox" className="appearance-none w-[10px] h-[10px] border border-gray-500 bg-white" />
        누적
      </label>
      <span className="ml-auto mr-2">[주]</span>
      <ToolButton className="w-[34px] mr-[2px]">차트</ToolButton>
      <ToolButton className="w-[34px]">조회</ToolButton>
    </div>
  );
}

// highlighter pen strokes drawn over the table
function Highlights() {
  return (
    <svg viewBox="156 527 810 244" className="absolute inset-0 w-full h-auto overflow-visible pointer-events-none mix-blend-multiply" fill="#ffe800">
      <path d="M156 545h65v9h-65zM164 642l64-1v9h-64zM150 653l60-1v10h-60zM156 669l53-1v9l-53 1z" />
      <path d="M437 542l84 1v8l-84-1zM436 668h88v9h-88z" />
      <path fillRule="evenodd" d="M485 638l33-1q2 6 1 15h12v9h-42q-6-1-6-8zM487 647v5l29-1v-5z" />
      <path fillRule="evenodd" d="M765 565l50 2q4 1 3 8q-2 50-9 84q-1 13-1 15h-46v-9h4q-3-40-2-98zM768 576q1 50 2 85q3 2 34 1q9-35 11-84q-20-4-47-2z" />
    </svg>
  );
}

function InvestorPanel() {
  return (
    <section className="flex-1 min-w-0 flex flex-col ml-px border-l border-gray-500 bg-[#e3e1e8]">
      <div className="h-[10px] bg-linear-to-b from-[#666] to-[#4a4a4a]" />
      <Tabs
        className="pt-px pl-px"
        tabs={['외인/기관 매매종합', '종목별 투자자 매매추이', '외인/기관 종목별매매추이', '외인/기관 순매수상위', '외인/기관 연속순매매', '종목별 평균단가']}
        active={1}
      />
      <InvestorFilter />
      <div className="relative flex">
        <table className="flex-1 table-fixed border-collapse text-[10px] leading-[13px] text-right bg-white">
          <colgroup>
            {columnWidths.map((w, i) => (
              <col key={i} className={w} />
            ))}
          </colgroup>
          <thead>
            <tr className="h-4">
              {columns.map((c, i) => (
                <th key={c} className={clsx('font-normal text-center text-[11px] leading-[14px] text-[#222] whitespace-nowrap border-r border-[#e8e8e8]', i > 3 && i < 7 ? 'bg-[#b6c8dd]' : 'bg-[#d5d5d5]')}>
                  {c}
                </th>
              ))}
            </tr>
          </thead>
          <tbody className="h-[228px]">
            {rows.map((row) => (
              <FlowRow key={row[0]} row={row} />
            ))}
          </tbody>
        </table>
        <div className="w-[11px] shrink-0 flex justify-center bg-[#f2f2f2] pt-[14px]">
          <div className="w-[2px] h-[137px] bg-[#8a8a8a]" />
        </div>
        <Highlights />
      </div>
    </section>
  );
}

export default function App() {
  return (
    <main className={clsx('min-h-screen flex flex-col bg-[#3d4149] pl-[2px] overflow-hidden', FONT)}>
      <div className="flex-1 flex flex-col border-l-[3px] border-[#5f86c9] bg-[#5c5c60]">
        <section>
          <div className="h-[2px] bg-[#6d7077]" />
          <TitleBar title="[4001] 주식종합차트 - 주식수[82,045(천)] 유동주[37,634(천)] 소진률[0,81%] 액면가[100] 자본금[82(억)] 시총[8,803(억)] PER[62,98] T,PER[91,58] PBR[3,24] 결산[12월]">
            <WindowControls />
          </TitleBar>
          <ChartToolbar />
          <QuoteBar />
          <div className="flex">
            <div className="flex-1 min-w-0">
              <div className="h-[13px] flex items-center justify-between px-1 bg-[#cfcae4] text-xs leading-none text-[#333]">
                <h3>와이씨</h3>
                <span>(일)</span>
              </div>
              <StockChart />
              <ChartScroll />
            </div>
            <DrawToolbar />
          </div>
        </section>
        <div className="flex-1 flex">
          <SectorPanel />
          <InvestorPanel />
        </div>
      </div>
    </main>
  );
}
